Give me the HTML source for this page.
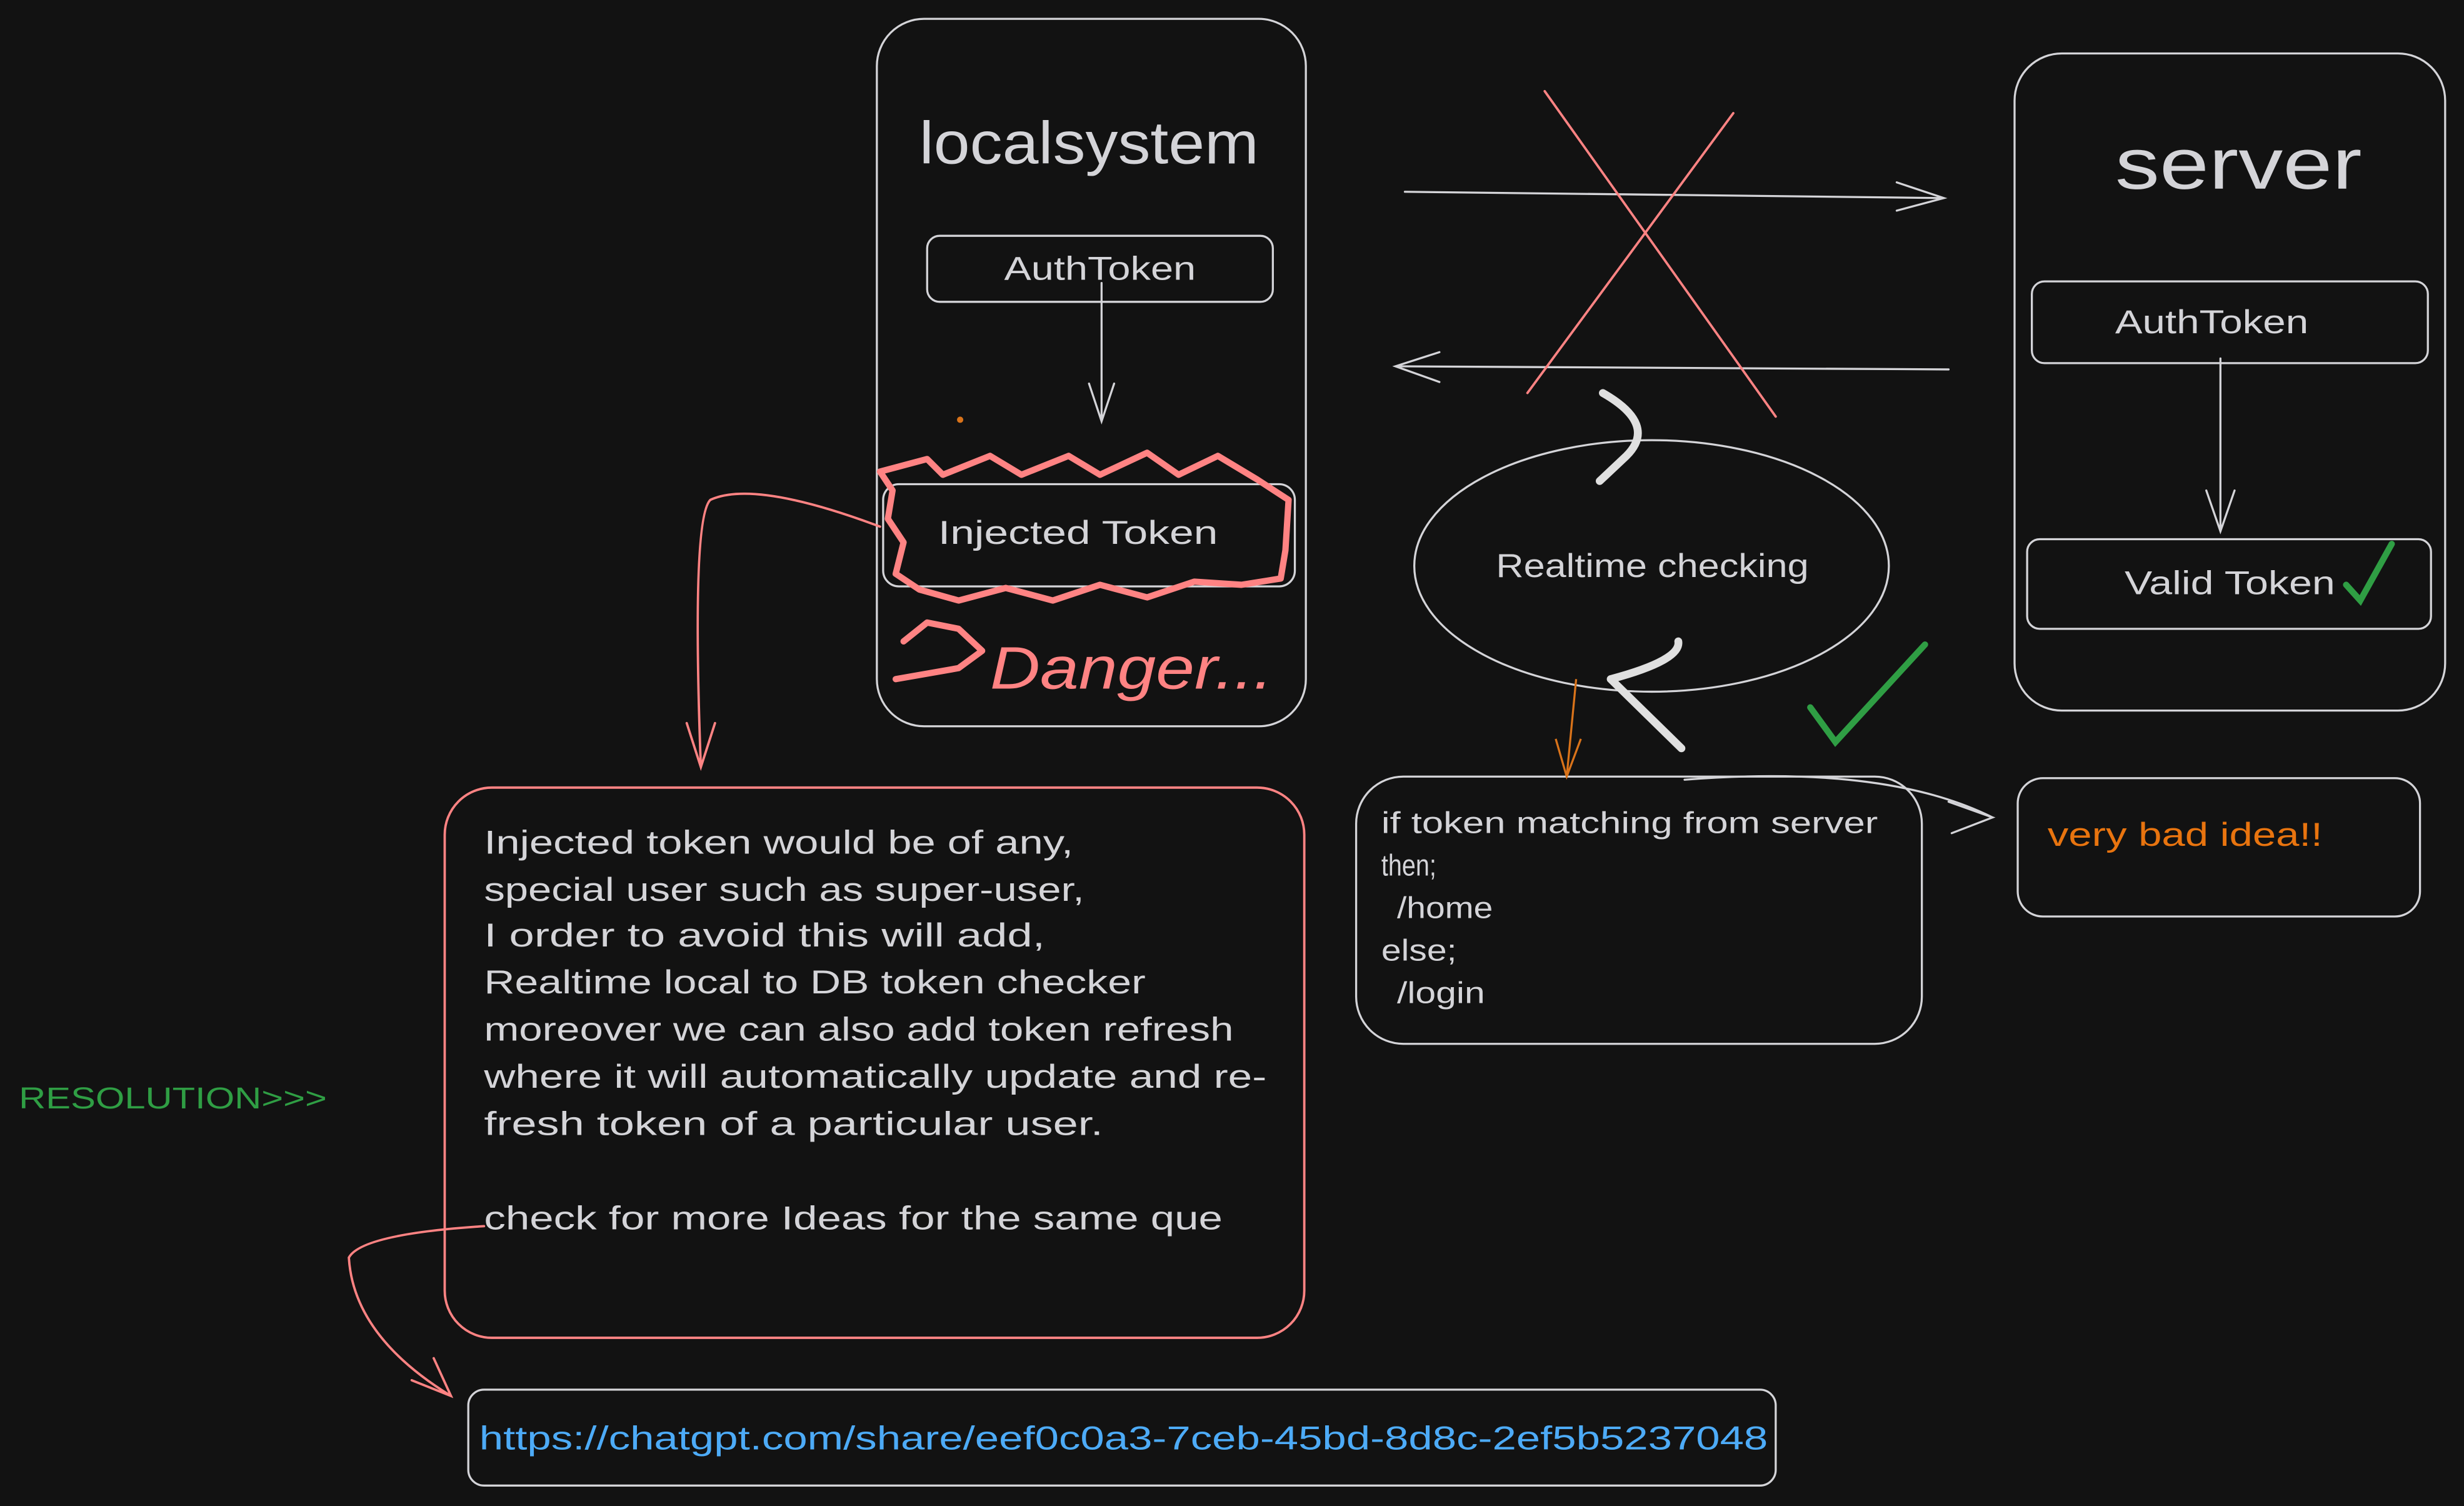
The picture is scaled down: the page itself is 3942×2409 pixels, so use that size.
<!DOCTYPE html>
<html><head><meta charset="utf-8"><style>
html,body{margin:0;padding:0;background:#121212;}
svg{display:block}
text{font-family:"Liberation Sans",sans-serif;fill:#d4d4d8}
</style></head><body>
<svg width="3942" height="2409" viewBox="0 0 1568 958" preserveAspectRatio="none" xmlns="http://www.w3.org/2000/svg">
<rect width="1568" height="958" fill="#121212"/>
<g fill="none" stroke="#d4d4d8" stroke-width="1.3" stroke-linecap="round">
<rect x="558" y="12" width="273" height="450" rx="30"/>
<rect x="590" y="150" width="220" height="42" rx="8"/>
<path d="M701 180 L701 268 M693 244 L701 268 L709 244"/>
<rect x="562" y="308" width="262" height="65" rx="10"/>
<path d="M894 122 L1237 126 M1207 116 L1237 126 L1207 134"/>
<path d="M1240 235 L888 233 M916 224 L888 233 L916 243"/>
<rect x="1282" y="34" width="274" height="418" rx="30"/>
<rect x="1293" y="179" width="252" height="52" rx="8"/>
<path d="M1413 228 L1413 338 M1404 312 L1413 338 L1422 312"/>
<rect x="1290" y="343" width="257" height="57" rx="8"/>
<ellipse cx="1051" cy="360" rx="151" ry="80"/>
<rect x="863" y="494" width="360" height="170" rx="30"/>
<path d="M1072 496 Q1200 486 1268 520 M1240 510 L1268 520 L1242 530"/>
<rect x="1284" y="495" width="256" height="88" rx="16"/>
<rect x="298" y="884" width="832" height="61" rx="10"/>
</g>
<g fill="none" stroke="#e0e0e0" stroke-width="5" stroke-linecap="round">
<path d="M1020 250 Q1055 270 1035 290 L1018 306"/>
<path d="M1068 408 Q1070 420 1025 432 M1025 432 L1070 476"/>
</g>
<g fill="none" stroke="#ff8383" stroke-width="1.5" stroke-linecap="round">
<path d="M983 58 L1130 265 M1103 72 L972 250"/>
<rect x="283" y="501" width="547" height="350" rx="30"/>
<path d="M560 335 Q480 305 452 318 Q440 330 446 488 M437 460 L446 488 L455 460"/>
<path d="M308 780 Q230 785 222 800 Q225 850 287 888 M262 878 L287 888 L276 864"/>
</g>
<g fill="none" stroke="#ff8383" stroke-width="4" stroke-linecap="round" stroke-linejoin="round">
<path d="M560 300 L590 292 L600 302 L630 290 L650 302 L680 290 L700 302 L730 288 L750 302 L775 290 L800 305 L820 318 L818 350 L815 368 L790 372 L760 370 L730 380 L700 372 L670 382 L640 374 L610 382 L585 375 L570 365 L575 345 L565 330 L568 312 Z"/>
<path d="M575 408 L590 396 L610 400 L625 414 L610 425 L570 432"/>
</g>
<g fill="none" stroke="#2f9e44" stroke-width="4" stroke-linecap="round">
<path d="M1152 450 L1168 472 L1225 410"/>
<path d="M1493 372 L1502 382 L1522 346"/>
</g>
<path d="M1003 432 L997 494 M990 470 L997 494 L1006 470" stroke="#d9731a" stroke-width="1.3" fill="none"/>
<circle cx="611" cy="267" r="2" fill="#d9731a"/>
<g lengthAdjust="spacingAndGlyphs">
<text x="585" y="104" font-size="38" textLength="216" lengthAdjust="spacingAndGlyphs">localsystem</text>
<text x="639" y="178" font-size="21" textLength="122" lengthAdjust="spacingAndGlyphs">AuthToken</text>
<text x="597" y="346" font-size="21" textLength="178" lengthAdjust="spacingAndGlyphs">Injected Token</text>
<text x="630" y="438" font-size="38" style="fill:#ff8383" font-style="italic" textLength="180" lengthAdjust="spacingAndGlyphs">Danger...</text>
<text x="1346" y="120" font-size="46" textLength="157" lengthAdjust="spacingAndGlyphs">server</text>
<text x="1346" y="212" font-size="21" textLength="123" lengthAdjust="spacingAndGlyphs">AuthToken</text>
<text x="1352" y="378" font-size="21" textLength="134" lengthAdjust="spacingAndGlyphs">Valid Token</text>
<text x="952" y="367" font-size="21" textLength="199" lengthAdjust="spacingAndGlyphs">Realtime checking</text>
<g font-size="19">
<text x="879" y="530" textLength="316" lengthAdjust="spacingAndGlyphs">if token matching from server</text>
<text x="879" y="557" textLength="35" lengthAdjust="spacingAndGlyphs">then;</text>
<text x="889" y="584" textLength="61" lengthAdjust="spacingAndGlyphs">/home</text>
<text x="879" y="611" textLength="48" lengthAdjust="spacingAndGlyphs">else;</text>
<text x="889" y="638" textLength="56" lengthAdjust="spacingAndGlyphs">/login</text>
</g>
<text x="1303" y="538" font-size="21" style="fill:#e8740f" textLength="175" lengthAdjust="spacingAndGlyphs">very bad idea!!</text>
<g font-size="21">
<text x="308" y="543" textLength="375" lengthAdjust="spacingAndGlyphs">Injected token would be of any,</text>
<text x="308" y="573" textLength="382" lengthAdjust="spacingAndGlyphs">special user such as super-user,</text>
<text x="308" y="602" textLength="357" lengthAdjust="spacingAndGlyphs">I order to avoid this will add,</text>
<text x="308" y="632" textLength="421" lengthAdjust="spacingAndGlyphs">Realtime local to DB token checker</text>
<text x="308" y="662" textLength="477" lengthAdjust="spacingAndGlyphs">moreover we can also add token refresh</text>
<text x="308" y="692" textLength="498" lengthAdjust="spacingAndGlyphs">where it will automatically update and re-</text>
<text x="308" y="722" textLength="394" lengthAdjust="spacingAndGlyphs">fresh token of a particular user.</text>
<text x="308" y="782" textLength="470" lengthAdjust="spacingAndGlyphs">check for more Ideas for the same que</text>
</g>
<text x="12" y="705" font-size="19" style="fill:#2f9e44" textLength="196" lengthAdjust="spacingAndGlyphs">RESOLUTION&gt;&gt;&gt;</text>
<text x="305" y="922" font-size="21" style="fill:#4dabf7" textLength="820" lengthAdjust="spacingAndGlyphs">https://chatgpt.com/share/eef0c0a3-7ceb-45bd-8d8c-2ef5b5237048</text>
</g>
</svg>
</body></html>
